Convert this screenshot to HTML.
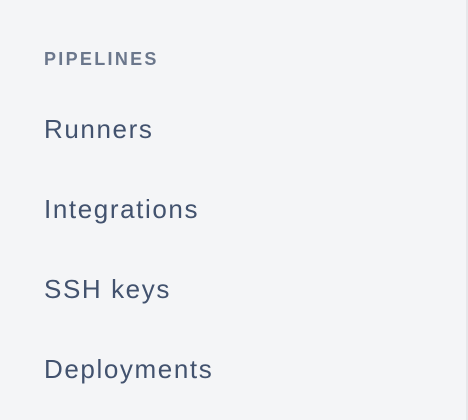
<!DOCTYPE html>
<html><head><style>
html,body{margin:0;padding:0}
body{width:468px;height:420px;background:#f4f5f7;position:relative;overflow:hidden;font-family:"Liberation Sans",sans-serif}
.b{position:absolute;right:0;top:0;width:2px;height:420px;background:#e6e7ea}
.h{position:absolute;left:44px;top:50px;font-size:18px;line-height:18px;font-weight:bold;color:#6b778c;letter-spacing:2.3px}
.i{position:absolute;left:44px;font-size:26px;line-height:26px;color:#42526e;letter-spacing:1.6px}
</style></head><body>
<div class="b"></div>
<div class="h">PIPELINES</div>
<div class="i" style="top:116px">Runners</div>
<div class="i" style="top:196px">Integrations</div>
<div class="i" style="top:276px">SSH keys</div>
<div class="i" style="top:356px">Deployments</div>
</body></html>
